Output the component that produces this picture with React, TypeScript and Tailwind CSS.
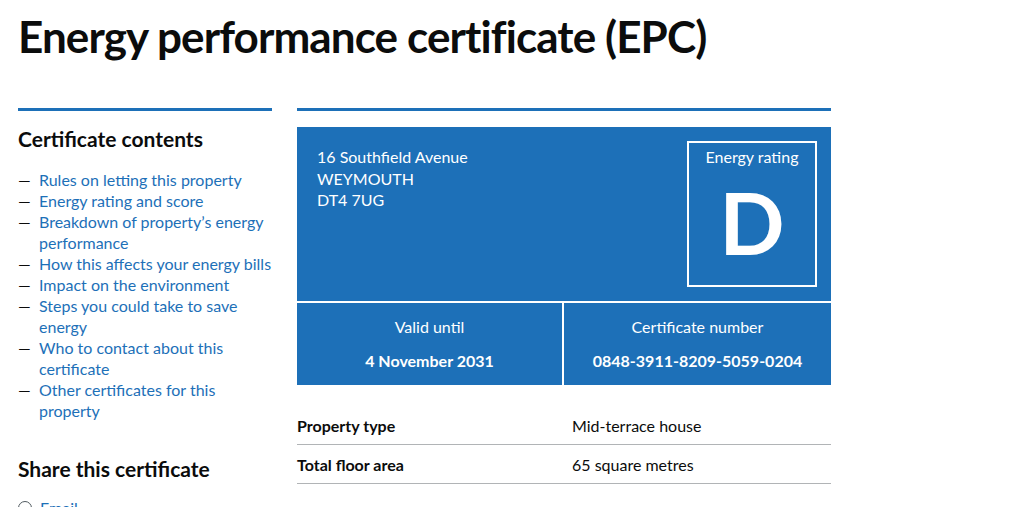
const contents = [
  'Rules on letting this property',
  'Energy rating and score',
  'Breakdown of property’s energy performance',
  'How this affects your energy bills',
  'Impact on the environment',
  'Steps you could take to save energy',
  'Who to contact about this certificate',
  'Other certificates for this property',
];

const summary = [
  { label: 'Property type', value: 'Mid-terrace house' },
  { label: 'Total floor area', value: '65 square metres' },
];

export default function App() {
  return (
    <div className="bg-white text-[#0b0c0c] font-['Lato',sans-serif] overflow-hidden h-[507px]">
      <div className="px-[18px] pt-[11px]">
        <h1 className="text-[44px] leading-[50px] font-bold tracking-[-0.9px]">
          Energy performance certificate (EPC)
        </h1>

        <div className="flex gap-[25px] mt-[47px]">
          {/* Sidebar */}
          <aside className="w-[254px] shrink-0 border-t-[3px] border-[#1d70b8] pt-[15px]">
            <h2 className="text-[21px] leading-[26px] font-bold">Certificate contents</h2>
            <ul className="mt-[17px] text-[16px] leading-[21px]">
              {contents.map((item) => (
                <li key={item} className="flex">
                  <span className="w-[21px] shrink-0 text-[#0b0c0c]">—</span>
                  <a href="#" className="text-[#1d70b8]">
                    {item}
                  </a>
                </li>
              ))}
            </ul>
            <h2 className="mt-[35px] text-[21px] leading-[26px] font-bold">Share this certificate</h2>
            <div className="mt-[15px] flex items-center gap-[8px] text-[16px] leading-[21px] text-[#1d70b8]">
              <span className="w-[14px] h-[14px] rounded-full border border-[#505a5f]" />
              Email
            </div>
          </aside>

          {/* Main */}
          <main className="w-[534px] shrink-0 border-t-[3px] border-[#1d70b8] pt-[16px]">
            <div className="bg-[#1d70b8] text-white">
              <div className="flex justify-between pl-[20px] pr-[14px] pt-[14px] pb-[14px]">
                <p className="pt-[5px] text-[16px] leading-[21.5px]">
                  16 Southfield Avenue
                  <br />
                  WEYMOUTH
                  <br />
                  DT4 7UG
                </p>
                <div className="w-[130px] h-[146px] border-2 border-white flex flex-col items-center">
                  <span className="mt-[3px] text-[16px] leading-[21px]">Energy rating</span>
                  <span className="mt-[10px] text-[86px] leading-[90px] font-bold">D</span>
                </div>
              </div>
              <div className="grid grid-cols-2 border-t-2 border-white h-[84px]">
                <div className="flex flex-col items-center pt-[13px] border-r-2 border-white">
                  <span className="text-[16px] leading-[21px]">Valid until</span>
                  <span className="mt-[13px] text-[16px] leading-[21px] font-bold">4 November 2031</span>
                </div>
                <div className="flex flex-col items-center pt-[13px]">
                  <span className="text-[16px] leading-[21px]">Certificate number</span>
                  <span className="mt-[13px] text-[16px] leading-[21px] font-bold">
                    0848-3911-8209-5059-0204
                  </span>
                </div>
              </div>
            </div>

            <dl className="mt-[21px] text-[16px] leading-[21px]">
              {summary.map((row) => (
                <div key={row.label} className="grid grid-cols-[275px_1fr] border-b border-[#b1b4b6] pt-[9px] pb-[8px]">
                  <dt className="font-bold">{row.label}</dt>
                  <dd>{row.value}</dd>
                </div>
              ))}
            </dl>
          </main>
        </div>
      </div>
    </div>
  );
}
